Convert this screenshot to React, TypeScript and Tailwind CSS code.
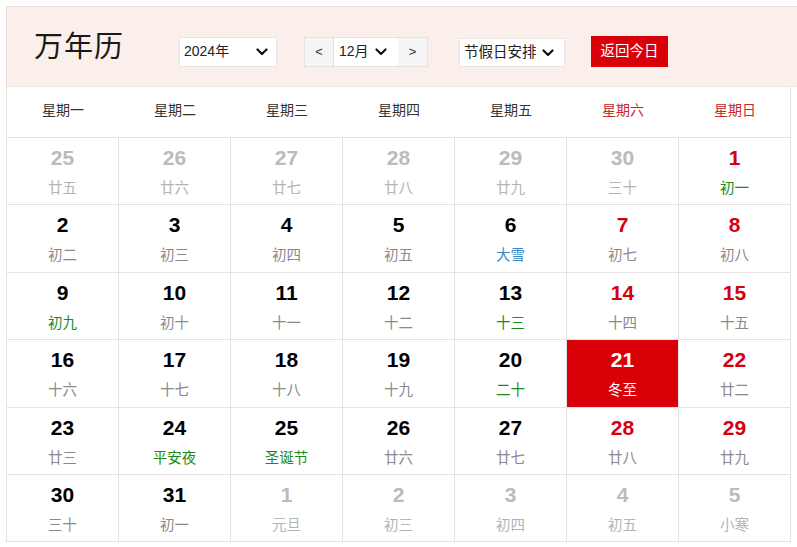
import React from "react";

type Cell = { d: number; l: string; kind: "out" | "norm" | "wk" | "today"; lc?: "green" | "blue" };

const rows: Cell[][] = [
  [
    { d: 25, l: "廿五", kind: "out" },
    { d: 26, l: "廿六", kind: "out" },
    { d: 27, l: "廿七", kind: "out" },
    { d: 28, l: "廿八", kind: "out" },
    { d: 29, l: "廿九", kind: "out" },
    { d: 30, l: "三十", kind: "out" },
    { d: 1, l: "初一", kind: "wk", lc: "green" },
  ],
  [
    { d: 2, l: "初二", kind: "norm" },
    { d: 3, l: "初三", kind: "norm" },
    { d: 4, l: "初四", kind: "norm" },
    { d: 5, l: "初五", kind: "norm" },
    { d: 6, l: "大雪", kind: "norm", lc: "blue" },
    { d: 7, l: "初七", kind: "wk" },
    { d: 8, l: "初八", kind: "wk" },
  ],
  [
    { d: 9, l: "初九", kind: "norm", lc: "green" },
    { d: 10, l: "初十", kind: "norm" },
    { d: 11, l: "十一", kind: "norm" },
    { d: 12, l: "十二", kind: "norm" },
    { d: 13, l: "十三", kind: "norm", lc: "green" },
    { d: 14, l: "十四", kind: "wk" },
    { d: 15, l: "十五", kind: "wk" },
  ],
  [
    { d: 16, l: "十六", kind: "norm" },
    { d: 17, l: "十七", kind: "norm" },
    { d: 18, l: "十八", kind: "norm" },
    { d: 19, l: "十九", kind: "norm" },
    { d: 20, l: "二十", kind: "norm", lc: "green" },
    { d: 21, l: "冬至", kind: "today" },
    { d: 22, l: "廿二", kind: "wk" },
  ],
  [
    { d: 23, l: "廿三", kind: "norm" },
    { d: 24, l: "平安夜", kind: "norm", lc: "green" },
    { d: 25, l: "圣诞节", kind: "norm", lc: "green" },
    { d: 26, l: "廿六", kind: "norm" },
    { d: 27, l: "廿七", kind: "norm" },
    { d: 28, l: "廿八", kind: "wk" },
    { d: 29, l: "廿九", kind: "wk" },
  ],
  [
    { d: 30, l: "三十", kind: "norm" },
    { d: 31, l: "初一", kind: "norm" },
    { d: 1, l: "元旦", kind: "out" },
    { d: 2, l: "初三", kind: "out" },
    { d: 3, l: "初四", kind: "out" },
    { d: 4, l: "初五", kind: "out" },
    { d: 5, l: "小寒", kind: "out" },
  ],
];

const weekdays = ["星期一", "星期二", "星期三", "星期四", "星期五", "星期六", "星期日"];

function Chevron() {
  return (
    <svg width="12" height="8" viewBox="0 0 12 8" fill="none">
      <path d="M1.5 1.5 L6 6 L10.5 1.5" stroke="#111" strokeWidth="2.2" strokeLinecap="round" strokeLinejoin="round" />
    </svg>
  );
}

function DayCell({ c }: { c: Cell }) {
  const numCls =
    c.kind === "out"
      ? "text-[#bbbbbb]"
      : c.kind === "wk"
      ? "text-[#d4000c]"
      : c.kind === "today"
      ? "text-white"
      : "text-black";
  let lunCls = "text-[#8a8a8a]";
  if (c.kind === "out") lunCls = "text-[#b4b4b4]";
  if (c.kind === "today") lunCls = "text-white";
  if (c.lc === "green") lunCls = "text-[#1b8a1b]";
  if (c.lc === "blue") lunCls = "text-[#3a88c5]";
  return (
    <div
      className={`flex flex-col items-center pt-[7px] border-b border-r border-[#e6e2e2] ${
        c.kind === "today" ? "bg-[#da0008]" : "bg-white"
      }`}
    >
      <div className={`text-[21px] leading-[26px] font-bold ${numCls}`} style={{ fontFamily: '"Liberation Sans", Arial, sans-serif' }}>
        {c.d}
      </div>
      <div className={`text-[14.5px] leading-[20px] mt-[7px] ${lunCls}`}>{c.l}</div>
    </div>
  );
}

export default function App() {
  return (
    <div
      className="w-[797px] h-[547px] overflow-hidden bg-white"
      style={{ fontFamily: '"Liberation Sans", "Noto Sans CJK SC", sans-serif' }}
    >
      <div className="ml-[6px] mt-[6px] w-[800px] border-l border-t border-[#eee0de]">
        {/* Header */}
        <div className="h-[80px] bg-[#fbefec] border-b border-[#efe2e0] flex items-center">
          <div className="ml-[27px] text-[29px] leading-[34px] text-[#1a1a1a] tracking-[1px]">万年历</div>
          <div className="ml-[55px] mt-[10px] w-[98px] h-[30px] bg-white border border-[#ece4e2] flex items-center justify-between pl-[4px] pr-[8px] text-[14px] text-[#222]">
            <span>2024年</span>
            <Chevron />
          </div>
          <div className="ml-[27px] mt-[10px] h-[30px] flex border border-[#e6e0df]">
            <div className="w-[29px] bg-[#f5f5f5] flex items-center justify-center text-[13px] text-[#333] border-r border-[#e6e0df]">&lt;</div>
            <div className="w-[64px] bg-white flex items-center pl-[5px] gap-[6px] text-[14px] text-[#222]">
              <span>12月</span>
              <Chevron />
            </div>
            <div className="w-[29px] bg-[#f5f5f5] flex items-center justify-center text-[13px] text-[#333]">&gt;</div>
          </div>
          <div className="ml-[31px] mt-[12px] w-[106px] h-[29px] bg-white border border-[#ece4e2] flex items-center pl-[4px] gap-[5px] text-[14.5px] text-[#222]">
            <span>节假日安排</span>
            <Chevron />
          </div>
          <div className="ml-[26px] mt-[10px] w-[77px] h-[31px] bg-[#da000a] text-white text-[14.5px] flex items-center justify-center">
            返回今日
          </div>
        </div>
        {/* Grid */}
        <div className="w-[784px]">
          <div className="grid grid-cols-[repeat(7,112px)] h-[51px] border-b border-r border-[#e6e2e2]">
            {weekdays.map((w, i) => (
              <div
                key={w}
                className={`flex items-center justify-center pb-[3px] text-[14px] ${i >= 5 ? "text-[#c8282d]" : "text-[#333]"}`}
              >
                {w}
              </div>
            ))}
          </div>
          {rows.map((r, ri) => (
            <div key={ri} className="grid grid-cols-[repeat(7,112px)] h-[67.4px]">
              {r.map((c, ci) => (
                <DayCell key={ci} c={c} />
              ))}
            </div>
          ))}
        </div>
      </div>
    </div>
  );
}
